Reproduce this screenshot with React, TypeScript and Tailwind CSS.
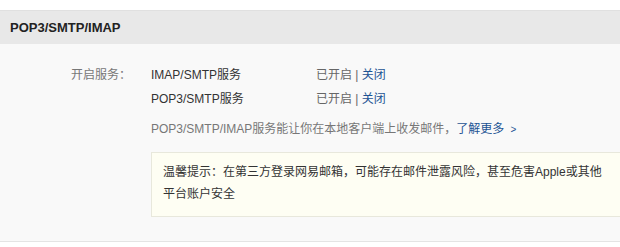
import React from "react";

const FONT = { fontFamily: '"Liberation Sans", "Noto Sans CJK SC", sans-serif' };

const SERVICES = [
  { name: "IMAP/SMTP服务", status: "已开启" },
  { name: "POP3/SMTP服务", status: "已开启" },
];

export default function App() {
  return (
    <div
      className="h-[247px] w-[620px] overflow-hidden bg-white pt-[10px] text-[12px]"
      style={FONT}
    >
      <div className="flex h-[34px] items-center border-t border-[#e0e0e0] bg-[#e8e8e8] px-[10px] text-[13px] font-bold text-[#222]">
        POP3/SMTP/IMAP
      </div>

      <div className="flex h-[198px] border-b border-[#e4e4e4] bg-[#f9f9f9] pt-[19px]">
        <div className="w-[131px] shrink-0 text-right leading-[24px] text-[#777]">
          开启服务：
        </div>

        <div className="ml-[20px] flex flex-col">
          {SERVICES.map((s) => (
            <div key={s.name} className="flex leading-[24px]">
              <span className="w-[165px] text-[#333]">{s.name}</span>
              <span className="text-[#666]">
                {s.status} | <a className="text-[#1d5494]">关闭</a>
              </span>
            </div>
          ))}

          <div className="mt-[6px] whitespace-nowrap leading-[24px] text-[#777]">
            POP3/SMTP/IMAP服务能让你在本地客户端上收发邮件，
            <a className="text-[#1d5494]">了解更多</a>
            <span className="ml-[6px] text-[10px] text-[#1d5494]">&gt;</span>
          </div>

          <div className="mt-[10px] w-[490px] border border-[#e8e8dc] bg-[#fefef3] pb-[11px] pl-[11px] pt-[8px] leading-[22px] text-[#333]">
            温馨提示：在第三方登录网易邮箱，可能存在邮件泄露风险，甚至危害Apple或其他
            <br />
            平台账户安全
          </div>
        </div>
      </div>
    </div>
  );
}
